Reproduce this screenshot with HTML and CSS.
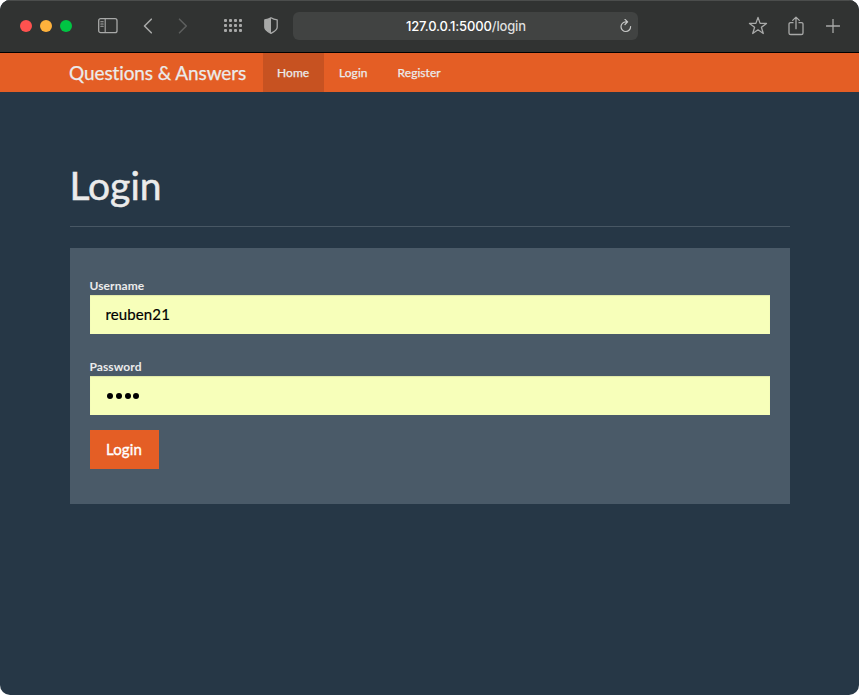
FILE: index.html
```html
<!DOCTYPE html>
<html lang="en">
<head>
<meta charset="utf-8">
<title>Login</title>
<link rel="stylesheet" href="styles.css">
</head>
<body>
<div class="window">
  <header class="toolbar">
    <div class="tools-left">
      <span class="light red"></span><span class="light amber"></span><span class="light green"></span>
      <svg class="sidebar" width="20" height="16" viewBox="0 0 20 16"><rect x=".7" y=".7" width="18.3" height="14" rx="2"/><path d="M7.2 1v13.5M2.8 3.8h2.4M2.8 6h2.4M2.8 8.2h2.4"/></svg>
      <svg class="back" width="10" height="16" viewBox="0 0 10 16"><path d="M8.3 1.2 1.5 8l6.8 6.8"/></svg>
      <svg class="forward" width="10" height="16" viewBox="0 0 10 16"><path d="M1.5 1.2 8.3 8l-6.8 6.8"/></svg>
      <span class="dots"><i></i><i></i><i></i><i></i><i></i><i></i><i></i><i></i><i></i><i></i><i></i><i></i></span>
      <svg class="shield" width="14" height="17" viewBox="0 0 14 17"><path d="M7 .8C5.2 2.1 3.2 2.7.8 2.8v7.4c0 2.8 3 4.500 6.200 6.100 3.200-1.600 6.200-3.300 6.200-6.100V2.800C10.800 2.700 8.800 2.100 7 .8z"/><path class="fill" d="M7 .8C5.200 2.100 3.200 2.700.8 2.800v7.400c0 2.800 3 4.500 6.200 6.100z"/></svg>
    </div>
    <div class="address">
      <span class="url">127.0.0.1:5000<span>/login</span></span>
      <svg class="reload" width="12" height="14" viewBox="0 0 12 14"><path d="M10.600 7.600A4.800 4.800 0 1 1 5.800 2.900h1.600M5 .4l2.600 2.500L5 5.500"/></svg>
    </div>
    <div class="tools-right">
      <svg width="20" height="19" viewBox="0 0 20 19"><path d="m10 1.400 2.100 6h6.400l-5.100 3.900 1.900 6.200L10 13.800l-5.300 3.700 1.900-6.200L1.500 7.400h6.400z"/></svg>
      <svg class="share" width="16" height="20" viewBox="0 0 16 20"><path d="M5 6.700H2.700C1.500 6.700 1 7.200 1 8.300v8.600c0 1.100.5 1.600 1.700 1.600h10.600c1.200 0 1.700-.5 1.700-1.600V8.300c0-1.100-.5-1.600-1.700-1.600H11M8 12.700V1.200M4.700 4.400 8 1.100l3.300 3.300"/></svg>
      <svg class="plus" width="14" height="14" viewBox="0 0 14 14"><path d="M7 .3v13.400M.3 7h13.400"/></svg>
    </div>
  </header>
  <nav class="navbar">
    <a class="brand">Questions &amp; Answers</a>
    <a class="link active">Home</a>
    <a class="link">Login</a>
    <a class="link">Register</a>
  </nav>
  <main class="container">
    <h1>Login</h1>
    <form class="well">
      <label for="username">Username</label>
      <input id="username" type="text" value="reuben21">
      <label>Password</label>
      <div class="field"><i></i><i></i><i></i><i></i></div>
      <button type="button">Login</button>
    </form>
  </main>
</div>
</body>
</html>
```
FILE: styles.css
```css
* { box-sizing: border-box; }
body { margin: 0; background: #fff; font-family: Lato, sans-serif; font-variant-ligatures: none; color: #ebebeb; }
.window { height: 695px; border-radius: 10px; overflow: hidden; background: #263746; }
svg { display: block; fill: none; stroke: #a8a9a8; stroke-width: 1.3; stroke-linecap: round; stroke-linejoin: round; flex: none; }

.toolbar { height: 53px; padding-bottom: 2px; display: flex; align-items: center; background: #313332; border-top: 1px solid #4b4d4c; border-bottom: 1px solid #000; }
.tools-left { width: 293px; padding-left: 20px; display: flex; align-items: center; }
.light { width: 12px; height: 12px; border-radius: 50%; margin-right: 8px; }
.red { background: #ff524f; }
.amber { background: #ffb23c; }
.green { background: #00c543; }
.sidebar { margin-left: 18px; }
.sidebar path { stroke-width: 1.1; }
.back { margin-left: 25px; stroke-width: 1.6; }
.forward { margin-left: 25px; stroke: #5c5e5d; stroke-width: 1.6; }
.dots { display: grid; grid-template-columns: repeat(4, 3px); gap: 2px; margin-left: 36px; }
.dots i { width: 3px; height: 3px; background: #a8a9a8; border-radius: 1px; }
.shield { margin-left: 22px; }
.shield .fill { fill: #a8a9a8; stroke: none; }
.address { width: 345px; height: 28px; border-radius: 6px; background: #414342; display: flex; align-items: center; justify-content: flex-end; padding-right: 6px; }
.url { width: 214px; font: 500 13px/28px Inter, sans-serif; letter-spacing: -.15px; color: #fff; }
.url span { color: #dedede; }
.reload { stroke: #c8c9c8; stroke-width: 1.2; }
.tools-right { margin-left: auto; padding-right: 19px; display: flex; align-items: center; }
.share { margin-left: 20px; }
.plus { margin-left: 22px; }

.navbar { height: 39px; background: #e45e25; display: flex; padding-left: 69px; line-height: 39px; -webkit-text-stroke: .25px; }
.brand { width: 194px; font-size: 19px; letter-spacing: -.1px; white-space: nowrap; }
.link { font-size: 12px; padding: 0 15px; letter-spacing: .05px; }
.link.active { width: 61px; padding: 0 14px; background: #c75221; }

.container { width: 720px; margin: 69px auto 0; }
h1 { margin: 0 0 21px; height: 66px; border-bottom: 1px solid #485764; font-size: 39px; font-weight: 400; line-height: 49px; -webkit-text-stroke: .5px; }
.well { height: 256px; padding: 29px 20px 0; background: #4a5a68; }
label { display: block; height: 18px; font-size: 12px; font-weight: 700; line-height: 18px; letter-spacing: .08px; }
input, .field { display: flex; align-items: center; width: 100%; height: 39px; margin: 0 0 24px; padding: 0 16px 2px; border: 0; border-radius: 0; background: #f7ffba; box-shadow: inset 0 1px 1px #00000018; color: #000; font: 15px Lato, sans-serif; letter-spacing: .12px; -webkit-text-stroke: .2px; }
.field { gap: 2.700px; padding: 1px 17.700px 0; margin-bottom: 15px; }
.field i { width: 6px; height: 6px; border-radius: 50%; background: #000; }
button { display: block; width: 69px; height: 39px; padding: 0 0 2px; border: 0; background: #e45e25; color: #fff; font: 15px Lato, sans-serif; letter-spacing: .1px; -webkit-text-stroke: .35px; }
```
